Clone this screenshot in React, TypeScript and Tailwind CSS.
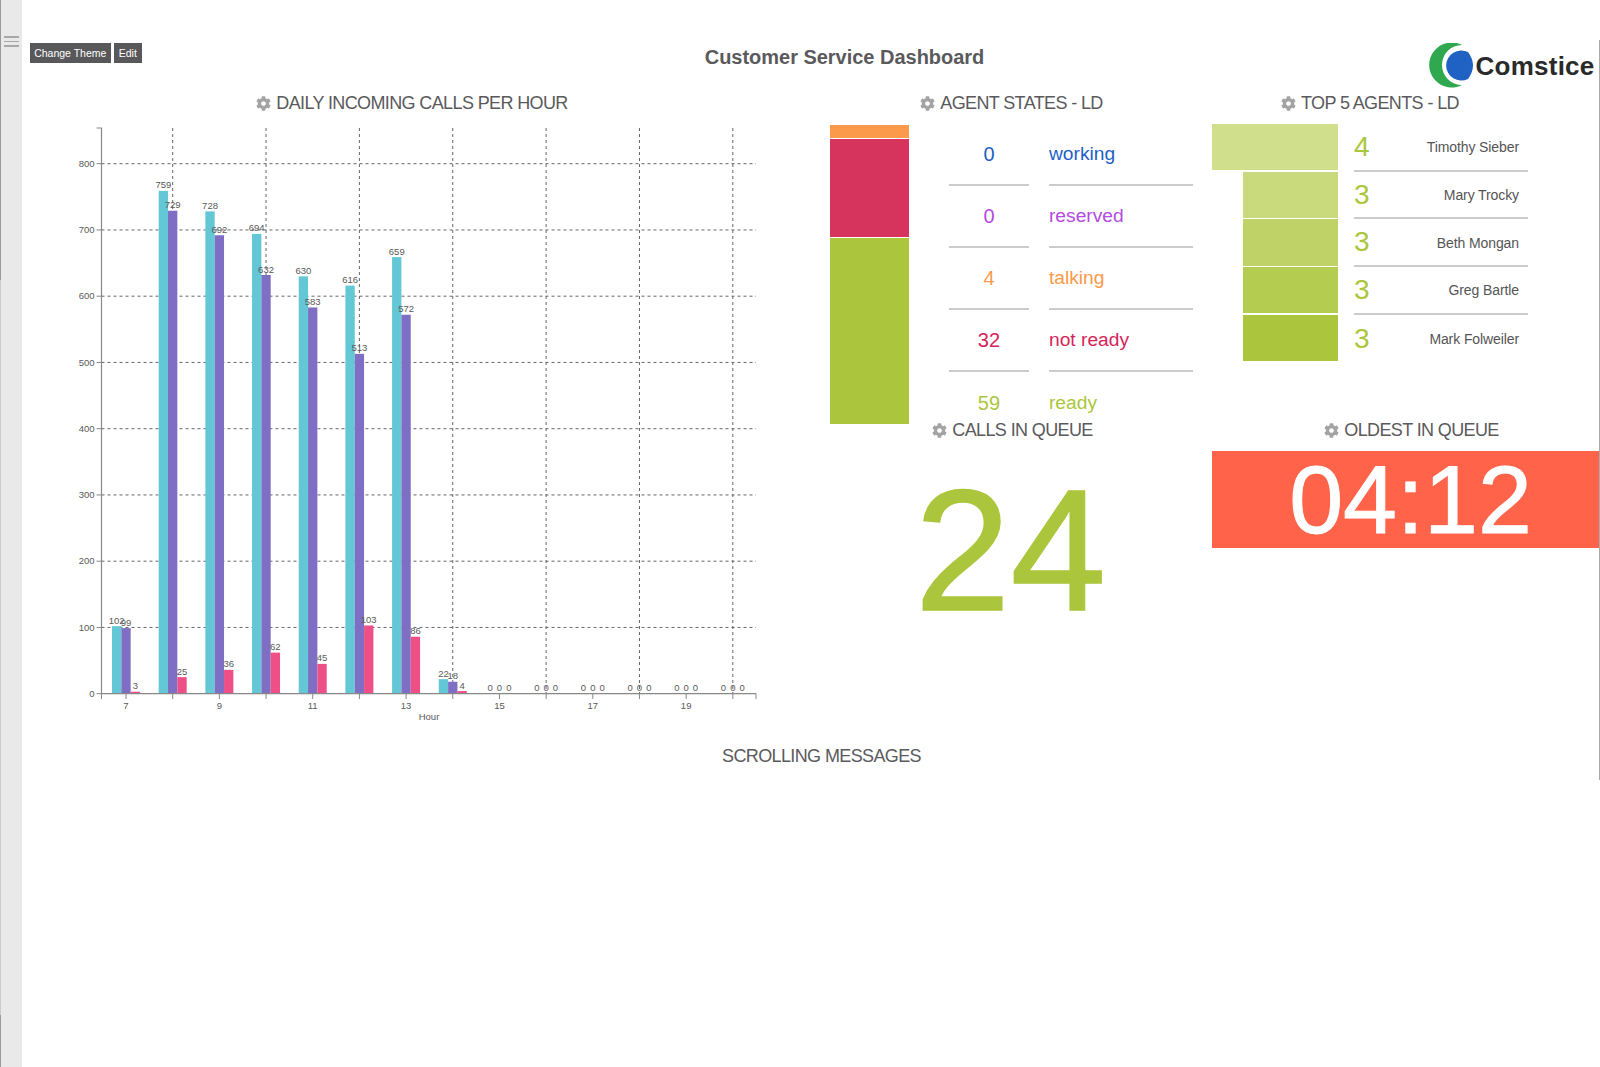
import { FaCog } from "react-icons/fa";

const hours = [7, 8, 9, 10, 11, 12, 13, 14, 15, 16, 17, 18, 19, 20];
const incoming = [102, 759, 728, 694, 630, 616, 659, 22, 0, 0, 0, 0, 0, 0];
const answered = [99, 729, 692, 632, 583, 513, 572, 18, 0, 0, 0, 0, 0, 0];
const missed = [3, 25, 36, 62, 45, 103, 86, 4, 0, 0, 0, 0, 0, 0];
const series = [
  { values: incoming, color: "#63c7d6", offset: -14 },
  { values: answered, color: "#7f6fc4", offset: -4.67 },
  { values: missed, color: "#ef4f87", offset: 4.67 },
];

const states = [
  { value: "0", label: "working", color: "text-[#1e5fc6]" },
  { value: "0", label: "reserved", color: "text-[#b44be0]" },
  { value: "4", label: "talking", color: "text-[#fa9a4a]" },
  { value: "32", label: "not ready", color: "text-[#d6245a]" },
  { value: "59", label: "ready", color: "text-[#abc63c]" },
];

const agents = [
  { score: "4", name: "Timothy Sieber", bar: "w-[126px] bg-[#cfdf8c]" },
  { score: "3", name: "Mary Trocky", bar: "w-[95px] bg-[#c8da7c]" },
  { score: "3", name: "Beth Mongan", bar: "w-[95px] bg-[#bed268]" },
  { score: "3", name: "Greg Bartle", bar: "w-[95px] bg-[#b4cd50]" },
  { score: "3", name: "Mark Folweiler", bar: "w-[95px] bg-[#abc63c]" },
];

const tickX = (i: number) => 126 + 46.68 * i;
const valueY = (v: number) => 693.7 - v * 0.6625;

const Heading = ({ title, className }: { title: string; className: string }) => (
  <div className={`flex items-center justify-center gap-[5px] h-[22px] text-[18px] leading-[22px] tracking-[-0.62px] text-[#5a5a5c] ${className}`}>
    <FaCog className="w-[15px] h-[15px] text-[#a3a3a3]" />
    <span>{title}</span>
  </div>
);

const Chart = () => (
  <svg viewBox="60 120 720 610" className="block w-[720px] h-[610px] ml-[38px] font-['Liberation_Sans',sans-serif]">
    {[100, 200, 300, 400, 500, 600, 700, 800].map((v) => (
      <line key={v} x1="101.5" x2="756" y1={valueY(v)} y2={valueY(v)} stroke="#666" strokeDasharray="3 3" />
    ))}
    {hours.map((h, i) =>
      h % 2 === 0 ? (
        <line key={h} x1={tickX(i)} x2={tickX(i)} y1="128" y2="693.7" stroke="#666" strokeDasharray="3 3" />
      ) : null
    )}
    {series.map((s) =>
      s.values.map((v, i) => (
        <g key={`${s.color}-${i}`}>
          <rect x={tickX(i) + s.offset} y={valueY(v)} width="9.33" height={v * 0.6625} fill={s.color} />
          <text x={tickX(i) + s.offset + 4.67} y={valueY(v) - 2.5} textAnchor="middle" fontSize="9.5" fill="#5a5a5a">
            {v}
          </text>
        </g>
      ))
    )}
    <path d="M96.5 128H101.5V693.7" fill="none" stroke="#888" strokeWidth="1.2" />
    <path d="M101.5 693.7H756" fill="none" stroke="#888" strokeWidth="1.2" />
    {[0, 100, 200, 300, 400, 500, 600, 700, 800].map((v) => (
      <g key={v}>
        <line x1="96.5" x2="101.5" y1={valueY(v)} y2={valueY(v)} stroke="#888" />
        <text x="94.5" y={valueY(v) + 3.2} textAnchor="end" fontSize="9.5" fill="#5a5a5a">
          {v}
        </text>
      </g>
    ))}
    <line x1="101.5" x2="101.5" y1="693.7" y2="699" stroke="#888" />
    <line x1="756" x2="756" y1="693.7" y2="699" stroke="#888" />
    {hours.map((h, i) => (
      <g key={h}>
        <line x1={tickX(i)} x2={tickX(i)} y1="693.7" y2="699" stroke="#888" />
        {h % 2 === 1 && (
          <text x={tickX(i)} y="708.5" textAnchor="middle" fontSize="9.5" fill="#5a5a5a">
            {h}
          </text>
        )}
      </g>
    ))}
    <text x="429" y="720" textAnchor="middle" fontSize="9.5" fill="#5a5a5a">
      Hour
    </text>
  </svg>
);

const Logo = () => (
  <div className="flex items-center h-[46px] ml-[160px] mt-[3px]">
    <svg viewBox="0 0 46 46" className="w-[46px] h-[46px] shrink-0">
      <path d="M33 2A22.5 22.5 0 1 0 33 42A20 20 0 1 1 33 2Z" fill="#2fa84f" />
      <path d="M39 9Q49 22.5 39 36A15.1 15.1 0 1 1 39 9Z" fill="#1f62c4" />
    </svg>
    <span className="ml-[0.5px] -mt-[1px] text-[26px] font-bold tracking-[0.25px] text-[#2a2a2a] leading-[46px]">Comstice</span>
  </div>
);

const App = () => {
  return (
    <div className="flex h-[1067px] bg-white font-['Liberation_Sans',sans-serif] overflow-hidden">
      <div className="flex w-[22px] shrink-0 bg-[#e9e9e9]">
        <div className="w-[1px] flex flex-col">
          <div className="h-[280px] bg-[#999]"></div>
          <div className="flex-1 bg-[#ccc]"></div>
          <div className="h-[52px] bg-[#999]"></div>
        </div>
        <div className="flex flex-col gap-[3px] w-[15px] ml-[3px] mt-[36px]">
          <div className="h-[1.5px] bg-[#a8a8a8]"></div>
          <div className="h-[1.5px] bg-[#a8a8a8]"></div>
          <div className="h-[1.5px] bg-[#a8a8a8]"></div>
        </div>
      </div>

      <div className="flex-1 pt-[40px]">
        <div className="h-[740px] border-r border-[#aaa]">
          <div className="flex items-start h-[52px]">
            <div className="w-[398px] flex gap-[2.5px] pl-[7.5px] pt-[3px]">
              <button className="w-[81.5px] h-[20px] bg-[#58585a] text-white text-[10.5px] leading-[20px]">Change Theme</button>
              <button className="w-[28.5px] h-[20px] bg-[#58585a] text-white text-[10.5px] leading-[20px]">Edit</button>
            </div>
            <h1 className="w-[849px] text-center text-[20px] font-bold tracking-[-0.02px] leading-[34px] text-[#5a5a5c]">
              Customer Service Dashboard
            </h1>
            <Logo />
          </div>

          <div className="flex">
            <div className="w-[807px]">
              <Heading title="DAILY INCOMING CALLS PER HOUR" className="pr-[27px]" />
              <div className="mt-[6px]">
                <Chart />
              </div>
            </div>

            <div className="w-[383px]">
              <Heading title="AGENT STATES - LD" className="pr-[18px]" />
              <div className="h-[305px] flex pt-[11px] pl-[0.6px]">
                <div className="w-[79.4px] flex flex-col gap-[1px] shrink-0">
                  <div className="h-[12.5px] shrink-0 bg-[#fa9a4a]"></div>
                  <div className="h-[98.5px] shrink-0 bg-[#d6345c]"></div>
                  <div className="h-[186px] shrink-0 bg-[#abc63c]"></div>
                </div>
                <div className="ml-[40px] -mt-[1px] grid grid-cols-[80px_144px] gap-x-[20px] content-start">
                  {states.map((s, i) => (
                    <div key={s.label} className="contents">
                      <div className={`h-[62px] flex items-center justify-center text-[20px] ${s.color} ${i < 4 ? "border-b-2 border-[#ccc]" : ""}`}>
                        {s.value}
                      </div>
                      <div className={`h-[62px] pt-[1px] flex items-center text-[19.2px] ${s.color} ${i < 4 ? "border-b-2 border-[#ccc]" : ""}`}>
                        {s.label}
                      </div>
                    </div>
                  ))}
                </div>
              </div>
              <Heading title="CALLS IN QUEUE" className="pr-[16px]" />
              <div className="mt-[23px] pr-[20px] text-center text-[172px] leading-[172px] text-[#abc63c] [-webkit-text-stroke:1.5px_#abc63c]">24</div>
            </div>

            <div className="w-[387px]">
              <Heading title="TOP 5 AGENTS - LD" className="pr-[71px]" />
              <div className="h-[305px] pt-[10px]">
                {agents.map((a, i) => (
                  <div key={a.name} className="flex h-[47.7px]">
                    <div className="w-[126px] flex justify-end">
                      <div className={`h-[46.4px] ${a.bar}`}></div>
                    </div>
                    <div className={`ml-[16px] w-[174px] pr-[9px] flex items-center justify-between ${i < 4 ? "border-b-2 border-[#ccc]" : ""}`}>
                      <span className="text-[28px] text-[#abc63c]">{a.score}</span>
                      <span className="pt-[2px] text-[14px] tracking-[-0.1px] text-[#555]">{a.name}</span>
                    </div>
                  </div>
                ))}
              </div>
              <Heading title="OLDEST IN QUEUE" className="pl-[12px]" />
              <div className="mt-[10px] h-[97px] bg-[#ff634a] flex items-center justify-center pl-[10px] text-white text-[97px] leading-[97px] [-webkit-text-stroke:1px_#ffffff]">
                04:12
              </div>
            </div>
          </div>

          <div className="mt-[15px] h-[22px] pl-[22px] text-center text-[18px] leading-[22px] tracking-[-0.62px] text-[#5a5a5c]">
            SCROLLING MESSAGES
          </div>
        </div>
      </div>
    </div>
  );
};

export default App;
